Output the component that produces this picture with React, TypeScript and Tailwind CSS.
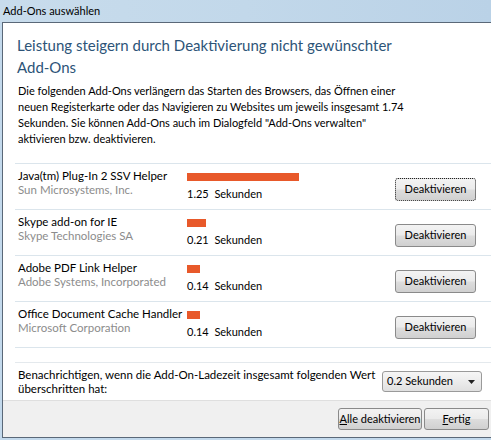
import React from "react";

const rows = [
  { name: "Java(tm) Plug-In 2 SSV Helper", company: "Sun Microsystems, Inc.", secs: "1.25", bar: 112, focus: true },
  { name: "Skype add-on for IE", company: "Skype Technologies SA", secs: "0.21", bar: 19, focus: false },
  { name: "Adobe PDF Link Helper", company: "Adobe Systems, Incorporated", secs: "0.14", bar: 13, focus: false },
  { name: "Office Document Cache Handler", company: "Microsoft Corporation", secs: "0.14", bar: 13, focus: false },
];

function WinButton({ children, className = "", focus = false }: { children: React.ReactNode; className?: string; focus?: boolean }) {
  return (
    <div
      className={
        "flex items-center justify-center whitespace-nowrap rounded-[3px] border text-[11px] text-black bg-[linear-gradient(#f3f3f3_0%,#ebebeb_48%,#dddddd_52%,#d0d0d0_100%)] " +
        (focus ? "border-dotted border-[#222]" : "border-[#8a8a8a]") +
        " " +
        className
      }
    >
      {children}
    </div>
  );
}

export default function App() {
  return (
    <div className="w-[491px] h-[440px] overflow-hidden bg-[#c3d9ec] font-['Lato','Liberation_Sans',sans-serif] text-black">
      <div className="h-[22px] flex items-center pl-[3px] text-[11px] text-black bg-[linear-gradient(90deg,#c8dcec_0%,#c2d8ea_50%,#bad2e7_100%)]">
        Add-Ons auswählen
      </div>
      <div className="ml-[2px] h-[416px] flex flex-col border-t border-l border-b border-[#5a6878] bg-white">
        <div className="flex-1 flex flex-col pl-[14px]">
          <div className="pt-[11px] text-[15px] leading-[22px] text-[#2d5478]">
            Leistung steigern durch Deaktivierung nicht gewünschter
            <br />
            Add-Ons
          </div>
          <div className="mt-[5px] pl-[1px] whitespace-nowrap text-[11px] leading-[16px] text-black">
            Die folgenden Add-Ons verlängern das Starten des Browsers, das Öffnen einer
            <br />
            neuen Registerkarte oder das Navigieren zu Websites um jeweils insgesamt 1.74
            <br />
            Sekunden. Sie können Add-Ons auch im Dialogfeld "Add-Ons verwalten"
            <br />
            aktivieren bzw. deaktivieren.
          </div>
          <div className="mt-[16px] -ml-[2px] border-t border-[#dbe5ec]">
            {rows.map((r) => (
              <div key={r.name} className="h-[46px] flex border-b border-[#dbe5ec]">
                <div className="w-[172px] pl-[3px] pt-[5px] text-[11.5px] leading-[14px]">
                  <div className="whitespace-nowrap">{r.name}</div>
                  <div className="whitespace-nowrap text-[#8c8c8c]">{r.company}</div>
                </div>
                <div className="w-[208px] pt-[9px]">
                  <div className="h-[8px] bg-[#e8592a]" style={{ width: r.bar }} />
                  <div className="mt-[6px] text-[11px] leading-[14px] whitespace-pre">{r.secs}  Sekunden</div>
                </div>
                <div className="pt-[14px]">
                  <WinButton focus={r.focus} className="w-[81px] h-[23px]">
                    Deaktivieren
                  </WinButton>
                </div>
              </div>
            ))}
          </div>
          <div className="mt-[14px] -ml-[2px] flex-1 flex items-center border-t border-[#e4e9ed] pr-[9px]">
            <div className="flex-1 pl-[3px] whitespace-nowrap text-[11.5px] leading-[14px]">
              Benachrichtigen, wenn die Add-On-Ladezeit insgesamt folgenden Wert
              <br />
              überschritten hat:
            </div>
            <div className="w-[100px] h-[21px] flex items-center justify-between pl-[4px] pr-[6px] rounded-[3px] border border-[#9a9a9a] text-[11px] bg-[linear-gradient(#f6f6f6_0%,#ececec_50%,#e0e0e0_100%)]">
              <span>0.2 Sekunden</span>
              <svg width="7" height="4" viewBox="0 0 7 4">
                <path d="M0 0 L7 0 L3.5 4 Z" fill="#222" />
              </svg>
            </div>
          </div>
        </div>
        <div className="h-[37px] flex justify-end items-start pt-[7px] pr-[2px] gap-[2px] bg-[#f0f0f0] border-t border-[#dfdfdf]">
          <WinButton className="w-[84px] h-[22px]">
            <span>
              <span className="underline">A</span>lle deaktivieren
            </span>
          </WinButton>
          <WinButton className="w-[65px] h-[22px]">
            <span>
              <span className="underline">F</span>ertig
            </span>
          </WinButton>
        </div>
      </div>
    </div>
  );
}
